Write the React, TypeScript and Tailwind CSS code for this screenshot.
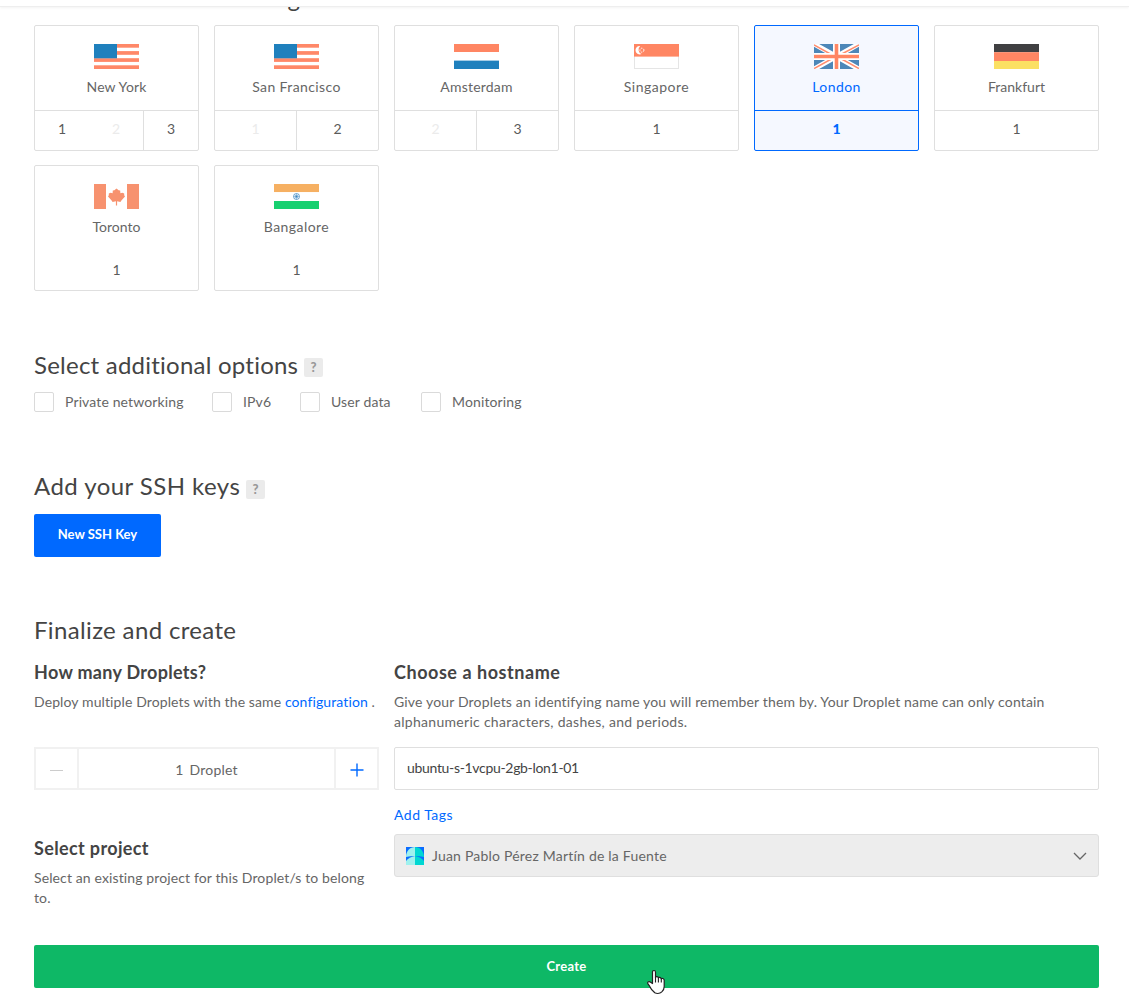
import React from "react";
import type { ReactNode } from "react";

type Slot = { n: string; cls: string };
type Region = {
  name: string;
  tracking: string;
  flag: ReactNode;
  slots: Slot[];
  selected?: boolean;
  plain?: boolean;
};

function Flag({ children }: { children: ReactNode }) {
  return (
    <svg width="45" height="25" viewBox="0 0 45 25" className="block">
      {children}
    </svg>
  );
}

const UsFlag = (
  <Flag>
    <rect width="45" height="25" fill="#fff" />
    {[0, 7.1, 14.2, 21.3].map((y) => (
      <rect key={y} y={y} width="45" height="3.7" fill="#ff8868" />
    ))}
    <rect width="23" height="14.3" fill="#1f80bd" />
  </Flag>
);

const NlFlag = (
  <Flag>
    <rect width="45" height="8" fill="#ff8663" />
    <rect y="8" width="45" height="9" fill="#fff" />
    <rect y="16.6" width="45" height="8.4" fill="#1f80bd" />
  </Flag>
);

const SgFlag = (
  <Flag>
    <rect x=".5" y=".5" width="44" height="24" fill="#fff" stroke="#e5e5e5" />
    <rect width="45" height="12.6" fill="#ff8663" />
    <path d="M6.2 2.1A4.2 4.2 0 1 0 7.6 10 4.6 4.6 0 0 1 6.2 2.1Z" fill="#fff" />
    <circle cx="7.9" cy="6.2" r="2" fill="none" stroke="#fff" strokeWidth="1" strokeDasharray="1.4 1.1" />
  </Flag>
);

const UkFlag = (
  <Flag>
    <rect width="45" height="25" fill="#4d87b8" />
    <path d="M0 0L45 25M45 0L0 25" stroke="#fff" strokeWidth="5" />
    <path d="M0 .8L20 12M24 13L45 24.6M45 .8L24 12M21 13L0 24.6" stroke="#ff8d6e" strokeWidth="1.5" />
    <path d="M22.5 0V25M0 12.5H45" stroke="#fff" strokeWidth="7" />
    <path d="M22.5 0V25M0 12.5H45" stroke="#ff8663" strokeWidth="3.6" />
  </Flag>
);

const DeFlag = (
  <Flag>
    <rect width="45" height="8.2" fill="#404042" />
    <rect y="8.2" width="45" height="8.8" fill="#ff8663" />
    <rect y="17" width="45" height="8" fill="#fbe063" />
  </Flag>
);

const CaFlag = (
  <Flag>
    <rect width="12" height="25" fill="#f7926f" />
    <rect x="33" width="12" height="25" fill="#f7926f" />
    <path
      d="M22.5 4.4L24.6 6.2L26.2 6.4L26.4 9.2L28.4 8.8L30.2 9.4V11.2L31 12.4L27.4 16.4L26.4 18L23.1 17.2V21.6H21.9V17.2L18.6 18L17.6 16.4L14 12.4L14.8 11.2V9.4L16.6 8.8L18.6 9.2L18.8 6.4L20.4 6.2Z"
      fill="#f7926f"
    />
  </Flag>
);

const InFlag = (
  <Flag>
    <rect width="45" height="8.2" fill="#f6b062" />
    <rect y="8.2" width="45" height="8.8" fill="#fff" />
    <rect y="17" width="45" height="8" fill="#17d070" />
    <circle cx="22.5" cy="12.5" r="3" fill="none" stroke="#5b9bcb" strokeWidth=".9" />
    <path d="M22.5 9.5V15.5M19.5 12.5H25.5M20.4 10.4L24.6 14.6M24.6 10.4L20.4 14.6" stroke="#5b9bcb" strokeWidth=".6" />
    <circle cx="22.5" cy="12.5" r="1" fill="#3c86bf" />
  </Flag>
);

const on = "text-[#5b5b5b]";
const off = "text-[#ebebeb]";

const regions: Region[] = [
  {
    name: "New York",
    tracking: "tracking-[0.12px]",
    flag: UsFlag,
    slots: [
      { n: "1", cls: "w-[54px] " + on },
      { n: "2", cls: "w-[54px] " + off },
      { n: "3", cls: "flex-1 border-l border-[#dfdfdf] " + on },
    ],
  },
  {
    name: "San Francisco",
    tracking: "tracking-[0.4px]",
    flag: UsFlag,
    slots: [
      { n: "1", cls: "w-[81px] " + off },
      { n: "2", cls: "flex-1 border-l border-[#dfdfdf] " + on },
    ],
  },
  {
    name: "Amsterdam",
    tracking: "tracking-[0.22px]",
    flag: NlFlag,
    slots: [
      { n: "2", cls: "w-[81px] " + off },
      { n: "3", cls: "flex-1 border-l border-[#dfdfdf] " + on },
    ],
  },
  { name: "Singapore", tracking: "tracking-[0.5px]", flag: SgFlag, slots: [{ n: "1", cls: "flex-1 " + on }] },
  {
    name: "London",
    tracking: "tracking-[0.4px]",
    flag: UkFlag,
    selected: true,
    slots: [{ n: "1", cls: "flex-1 font-black text-[#0069ff]" }],
  },
  { name: "Frankfurt", tracking: "tracking-[0px]", flag: DeFlag, slots: [{ n: "1", cls: "flex-1 " + on }] },
  { name: "Toronto", tracking: "tracking-[0px]", flag: CaFlag, plain: true, slots: [{ n: "1", cls: "flex-1 " + on }] },
  { name: "Bangalore", tracking: "tracking-[0.45px]", flag: InFlag, plain: true, slots: [{ n: "1", cls: "flex-1 " + on }] },
];

function RegionCard({ region }: { region: Region }) {
  const { selected, plain } = region;
  const tone = selected ? "border-[#0069ff] bg-[#f5f8ff]" : "border-[#dfdfdf] bg-white";
  const line = plain ? "border-transparent" : selected ? "border-[#0069ff]" : "border-[#dfdfdf]";
  return (
    <div className={"flex h-[126px] flex-col rounded-[2px] border " + tone}>
      <div className={"flex h-[85px] shrink-0 flex-col items-center border-b pt-[18px] " + line}>
        {region.flag}
        <div
          className={
            "mt-[8px] leading-5 " + region.tracking + " " + (selected ? "text-[#0069ff]" : "text-[#666]")
          }
        >
          {region.name}
        </div>
      </div>
      <div className="flex flex-1">
        {region.slots.map((s) => (
          <div key={s.n} className={"flex justify-center leading-5 " + (plain ? "pt-[9px] " : "pt-[8px] ") + s.cls}>
            {s.n}
          </div>
        ))}
      </div>
    </div>
  );
}

function Help() {
  return (
    <span className="flex h-[19px] w-[19px] items-center justify-center rounded-[2px] bg-[#ebebeb] text-[13px] font-black text-[#999]">
      ?
    </span>
  );
}

const options = [
  { label: "Private networking", cls: "w-[178px]" },
  { label: "IPv6", cls: "w-[88px]" },
  { label: "User data", cls: "w-[121px]" },
  { label: "Monitoring", cls: "" },
];

export default function App() {
  return (
    <div className="relative h-[1007px] overflow-hidden bg-white pr-[30px] pl-[34px] font-['Lato',sans-serif] text-[14px] text-[#666]">
      <div className="absolute inset-x-0 top-0 z-10 h-[7px] border-b border-[#eeeeee] bg-white shadow-[0_1px_3px_rgba(0,0,0,0.05)]" />

      <h2 className="-mt-[17px] h-[42px] text-[24px] leading-[30px] tracking-[0.46px] text-[#444]">
        Choose a datacenter region
      </h2>

      <div className="grid grid-cols-6 gap-x-[15px] gap-y-[14px]">
        {regions.map((r) => (
          <RegionCard key={r.name} region={r} />
        ))}
      </div>

      <div className="mt-[59px] flex h-[31px] items-end pb-px">
        <h2 className="w-[270px] text-[24px] leading-[30px] tracking-[0.23px] whitespace-nowrap text-[#444]">
          Select additional options
        </h2>
        <div className="mb-[3px]">
          <Help />
        </div>
      </div>
      <div className="mt-[11px] flex h-5 items-center">
        {options.map((o) => (
          <label key={o.label} className={"flex items-center " + o.cls}>
            <span className="h-5 w-5 shrink-0 rounded-[2px] border border-[#dadada] bg-white" />
            <span className="ml-[11px] leading-5 tracking-[0.13px] whitespace-nowrap">{o.label}</span>
          </label>
        ))}
      </div>

      <div className="mt-[59px] flex h-[31px] items-end pb-px">
        <h2 className="w-[212px] text-[24px] leading-[30px] tracking-[0.44px] whitespace-nowrap text-[#444]">
          Add your SSH keys
        </h2>
        <div className="mb-[2px]">
          <Help />
        </div>
      </div>
      <button className="mt-[12px] block h-[43px] w-[127px] rounded-[2px] bg-[#0069ff] pb-[2px] text-[13px] font-bold text-white">
        New SSH Key
      </button>

      <h2 className="mt-[58px] text-[24px] leading-[30px] tracking-[0.35px] text-[#444]">Finalize and create</h2>

      <div className="mt-[15px] grid grid-cols-[345px_705px] gap-x-[15px]">
        <div>
          <h3 className="text-[18px] leading-6 font-bold tracking-[0.3px] text-[#444]">How many Droplets?</h3>
          <p className="mt-[8px] h-[55px] leading-5 tracking-[0.11px] whitespace-nowrap">
            Deploy multiple Droplets with the same <a className="text-[#0069ff]">configuration</a> .
          </p>
          <div className="flex h-[43px] border-2 border-[#f1f1f1]">
            <div className="flex w-[41px] items-center justify-center">
              <span className="mt-[3px] h-px w-[13px] bg-[#ccc]" />
            </div>
            <div className="flex flex-1 items-center justify-center border-x-2 border-[#f1f1f1] pt-[1px] tracking-[0.2px]">
              1<span className="ml-[6px]">Droplet</span>
            </div>
            <div className="flex w-[41px] items-center justify-center">
              <svg width="14" height="14" viewBox="0 0 14 14" className="mt-[3px]">
                <path d="M7 .5V13.5M.5 7H13.5" stroke="#0069ff" strokeWidth="1.4" />
              </svg>
            </div>
          </div>
          <h3 className="mt-[46px] text-[18px] leading-6 font-bold tracking-[0.36px] text-[#444]">Select project</h3>
          <p className="mt-[8px] leading-5 tracking-[0.12px]">
            Select an existing project for this Droplet/s to belong
            <br />
            to.
          </p>
        </div>
        <div>
          <h3 className="text-[18px] leading-6 font-bold tracking-[0.54px] text-[#444]">Choose a hostname</h3>
          <p className="mt-[8px] h-[55px] leading-5 tracking-[0.16px]">
            Give your Droplets an identifying name you will remember them by. Your Droplet name can only contain
            <br />
            <span className="tracking-[0.29px]">alphanumeric characters, dashes, and periods.</span>
          </p>
          <div className="flex h-[43px] items-center rounded-[2px] border border-[#dfdfdf] px-3 pb-[2px] tracking-[-0.32px] text-[#444]">
            ubuntu-s-1vcpu-2gb-lon1-01
          </div>
          <a className="mt-[15px] block leading-5 tracking-[0.5px] text-[#0069ff]">Add Tags</a>
          <div className="mt-[9px] flex h-[43px] items-center rounded-[3px] border border-[#dfdfdf] bg-[#ededed] pr-[11px] pl-[11px]">
            <svg width="18" height="18" viewBox="0 0 18 18">
              <rect width="18" height="18" fill="#0a6cff" />
              <path d="M9 0C4 0 0 4 0 10Q4 9 9 9Z" fill="#9ff1ee" />
              <path d="M9 0C14 0 18 4 18 10Q14 9 9 9Z" fill="#00d7d2" />
              <path d="M9 9Q3 10 0 14V18H9Z" fill="#9ff1ee" />
              <path d="M9 9Q15 10 18 14V18H9Z" fill="#00d7d2" />
            </svg>
            <span className="ml-2 flex-1 pt-px leading-5 tracking-[0.21px]">Juan Pablo Pérez Martín de la Fuente</span>
            <svg width="14" height="8" viewBox="0 0 14 8" fill="none">
              <path d="M1 1L7 7L13 1" stroke="#666" strokeWidth="1.3" />
            </svg>
          </div>
        </div>
      </div>

      <button className="mt-[37px] block h-[43px] w-[1065px] rounded-[2px] bg-[#0eb866] text-[13px] font-bold tracking-[0.27px] text-white">
        Create
      </button>

      <svg className="absolute top-[969px] left-[646px]" width="20" height="26" viewBox="0 0 20 26">
        <path
          d="M6.5 14.5V3.2Q6.5 1.5 8 1.5T9.5 3.2V8.4Q9.7 7.6 11 7.7T12.4 9Q12.8 8.3 13.8 8.4T15.2 9.9Q15.7 9.3 16.7 9.5T18.2 11V17.5Q18.2 20.5 16 22.6L14.5 23.8Q11.5 25.2 8.8 23.8Q5 20.5 3.6 17.2L1.8 14.6Q1.3 13.3 2.4 12.8T4.6 13.2Z"
          fill="#fff"
          stroke="#222"
          strokeWidth="1.2"
          strokeLinejoin="round"
        />
        <path d="M9.5 8V13.5M12.4 9V13.5M15.3 9.8V13.5" stroke="#222" strokeWidth="1.1" />
      </svg>
    </div>
  );
}
